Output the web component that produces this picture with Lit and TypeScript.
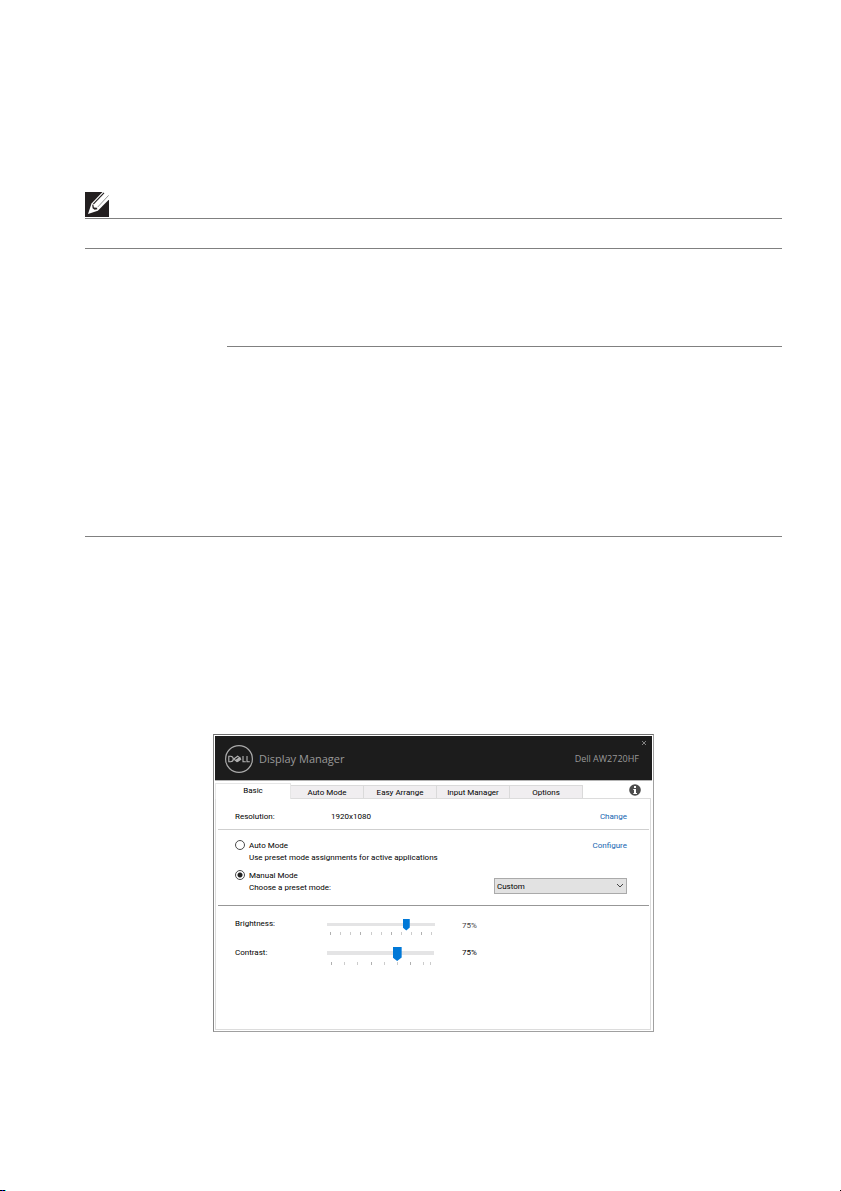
import { LitElement, html, css, svg } from "lit";
import { customElement, property, state } from "lit/decorators.js";

@customElement("level-slider")
class LevelSlider extends LitElement {
  @property() label = "";
  @property({ type: Number }) position = 50;
  @property() shown = "";
  @property({ type: Array }) ticks: number[] = [];
  @property({ type: Boolean, reflect: true }) large = false;

  static styles = css`
    :host { display: grid; grid-template-columns: 92px 108px 1fr; align-items: start; height: 29px; }
    label, output { line-height: 12px; }
    label { margin-top: 1px; }
    output { padding-left: 27px; margin-top: 3px; color: #444; }
    .scale { display: block; }
    input { appearance: none; display: block; width: 108px; height: 14px; margin: 0; background: none; }
    input::-webkit-slider-runnable-track { height: 3px; background: #e4e4e5; }
    input::-webkit-slider-thumb {
      appearance: none; width: 7px; height: 12px; margin-top: -4px;
      background: #0078d7; border: 0; border-radius: 0;
      clip-path: polygon(0 0, 100% 0, 100% 75%, 50% 100%, 0 75%);
    }
    svg { display: block; width: 108px; height: 4px; margin-top: 1px; }
    :host([large]) output { color: #000; margin-top: 1px; }
    :host([large]) input { width: 107px; }
    :host([large]) input::-webkit-slider-runnable-track { height: 4px; }
    :host([large]) input::-webkit-slider-thumb { width: 9px; height: 14px; }
    :host([large]) svg { margin-top: 2px; }
  `;

  render() {
    return html`
      <label for="level">${this.label}</label>
      <div class="scale">
        <input id="level" type="range" min="0" max="100" .value=${String(this.position)} />
        <svg viewBox="0 0 108 4" aria-hidden="true">
          ${this.ticks.map((x, i) => svg`<rect x=${x} y="0" width="1" height="3" fill=${i % 3 ? "#cccccc" : "#b0b0b0"} />`)}
        </svg>
      </div>
      <output for="level">${this.shown}</output>
    `;
  }
}

@customElement("display-manager")
class DisplayManager extends LitElement {
  @state() private mode = "manual";

  static styles = css`
    :host {
      display: flex; flex-direction: column; box-sizing: border-box; width: 100%; max-width: 441px; min-height: 298px;
      padding: 1px; border: 1px solid #a0a0a0; border-top-color: #707070; border-left-color: #868686;
      background: #fff; color: #000; font: 8px/12px Roboto, "Open Sans", sans-serif;
    }
    header { display: flex; height: 44px; background: #1c1c1c; color: #999; border-bottom: 1px solid #b4b4b4; }
    .logo { width: 30px; height: 30px; margin: 8px 0 0 9px; }
    h1 { flex: 1; margin: 14px 0 0 5px; font: 400 11px/18px "Open Sans", sans-serif; }
    .close { width: 10px; height: 10px; margin: 2px 3px 0 0; padding: 2px; border: 0; background: none; color: #8c8c8c; }
    .close svg, .info svg { display: block; width: 100%; height: 100%; }
    .right { display: flex; flex-direction: column; align-items: flex-end; }
    .device { margin: 4px 13px 0 0; font: 9px/14px "Open Sans", sans-serif; }
    nav { display: flex; align-items: flex-end; height: 18px; }
    .tab {
      flex: 0 0 73px; height: 14px; padding: 1px 0 0; font: inherit; color: #000; background: #f0eef0;
      border: 1px solid #dadada; border-left: 0; line-height: 12px;
    }
    .tab.active {
      position: relative; z-index: 1; flex-basis: 76px; height: 16px; padding-bottom: 2px;
      background: #fff; border-color: #e6e6e6; border-bottom: 0; border-left: 1px solid #e6e6e6;
    }
    .info { width: 12px; height: 12px; margin: 0 11px 3px auto; padding: 0; border: 0; background: none; }
    .panel { flex: 1; margin: -1px 1px 0 0; border: 1px solid #dcdcdc; padding: 0 1px 0 2px; }
    .row { display: flex; justify-content: space-between; padding: 0 22px 0 17px; }
    .resolution { height: 31px; padding-top: 12px; box-sizing: border-box; border-bottom: 1px solid #cfcfcf; }
    .resolution span:first-child { width: 96px; }
    .resolution a { margin-left: auto; }
    a { color: #1464b0; text-decoration: none; }
    .modes { height: 76px; box-sizing: border-box; padding-top: 10px; border-bottom: 1px solid #979797; }
    .option { display: grid; grid-template-columns: 14px 1fr; }
    .option input { appearance: none; width: 10px; height: 10px; margin: 0; border: 1px solid #4b4b4b; border-radius: 50%; background: #fff; }
    .option input:checked { background: radial-gradient(circle, #222 0 2px, #fff 3px); }
    .option p { grid-column: 2; margin: 0; }
    .manual { margin-top: 6px; }
    .select { position: relative; display: block; width: 133px; height: 16px; margin-top: 8px; }
    select { appearance: none; width: 100%; height: 16px; padding: 1px 2px 0; border: 1px solid #aaa; border-radius: 0; background: #e2e2e2; color: #000; font: inherit; }
    .select svg { position: absolute; right: 3px; top: 5px; width: 8px; height: 6px; pointer-events: none; }
    .levels { padding: 11px 0 0 17px; }
  `;

  private pick(mode: string) {
    this.mode = mode;
  }

  render() {
    return html`
      <header>
        <svg class="logo" viewBox="0 0 30 30" role="img" aria-label="Dell">
          <circle cx="15" cy="15" r="13.4" fill="none" stroke="#aaa" stroke-width="1.2" />
          <g fill="none" stroke="#b4b4b4" stroke-width="1.1">
            <path d="M4.8 12.2v5.6h1.7q2.8-.2 2.8-2.8t-2.8-2.8zM19 12v5.7h2.8M23 12v5.7h2.8" />
            <path d="M9.8 15l3.8-2.8 1.8 1.4-3.7 2.8zM12.8 16.7l3.9-2.9M13.2 17.9l3.9-2.9M9.8 15l3.4 2.9" />
          </g>
        </svg>
        <h1>Display Manager</h1>
        <div class="right">
          <button class="close" aria-label="Close"><svg viewBox="0 0 6 6"><path d="M1 1l4 4M5 1L1 5" stroke="currentColor" stroke-width=".9" /></svg></button>
          <span class="device">Dell AW2720HF</span>
        </div>
      </header>
      <nav>
        ${["Basic", "Auto Mode", "Easy Arrange", "Input Manager", "Options"].map(
          (name, i) => html`<button class="tab ${i === 0 ? "active" : ""}">${name}</button>`
        )}
        <button class="info" aria-label="Information">
          <svg viewBox="0 0 12 12"><circle cx="6" cy="6" r="5.8" fill="#4c4c4c" /><path d="M5 2h2v2H5zM4.3 5H7v4h1v1H4.3V9H5V6h-.7z" fill="#fff" /></svg>
        </button>
      </nav>
      <div class="panel">
        <div class="row resolution"><span>Resolution:</span><span>1920x1080</span><a href="#change">Change</a></div>
        <div class="modes">
          <div class="row">
            <div class="option">
              <input id="auto" type="radio" name="mode" .checked=${this.mode === "auto"} @change=${() => this.pick("auto")} />
              <label for="auto">Auto Mode</label>
              <p>Use preset mode assignments for active applications</p>
            </div>
            <a href="#configure">Configure</a>
          </div>
          <div class="row manual">
            <div class="option">
              <input id="manual" type="radio" name="mode" .checked=${this.mode === "manual"} @change=${() => this.pick("manual")} />
              <label for="manual">Manual Mode</label>
              <p><label for="preset">Choose a preset mode:</label></p>
            </div>
            <span class="select">
              <select id="preset"><option>Custom</option></select>
              <svg viewBox="0 0 8 6"><path d="M1 1l3 3 3-3" fill="none" stroke="#444" /></svg>
            </span>
          </div>
        </div>
        <div class="levels">
          <level-slider label="Brightness:" shown="75%" .position=${75} .ticks=${[3, 13, 23, 33, 44, 54, 64, 74, 84, 94, 104]}></level-slider>
          <level-slider large label="Contrast:" shown="75%" .position=${67} .ticks=${[4, 17, 30, 44, 57, 70, 83, 96, 103]}></level-slider>
        </div>
      </div>
    `;
  }
}

@customElement("app-root")
class AppRoot extends LitElement {
  static styles = css`
    :host { display: flex; flex-direction: column; min-height: 100vh; background: #fff; }
    main { padding: 192px 59px 0 85px; }
    .note { display: block; width: 24px; height: 25px; margin-bottom: 1px; }
    .sheet { border-top: 1px solid #808080; border-bottom: 1px solid #808080; }
    .heading { height: 29px; border-bottom: 1px solid #808080; }
    .body { display: grid; grid-template-columns: 142px 1fr; grid-template-rows: 98px 189px; }
    .upper { grid-column: 2; border-bottom: 1px solid #808080; }
    .figure { display: flex; justify-content: center; margin-top: 197px; }
    footer { display: flex; justify-content: space-between; height: 1px; margin-top: auto; }
    .start { width: 6px; background: linear-gradient(90deg, #000 0 2px, #00f 2px 3px, #000 3px 5px, #0ff 5px); }
    .end { width: 1px; background: #000; }
  `;

  render() {
    return html`
      <main>
        <svg class="note" viewBox="0 0 24 25" role="img" aria-label="Note">
          <path d="M0 0h24v25H0z" fill="#231f20" />
          <path d="M3 22L6.5 11.5 17.5 0H24v7.5L12.8 18.8z" fill="#fff" />
          <path d="M19 .8L8.3 12.2" fill="none" stroke="#231f20" stroke-width="1.1" />
          <path d="M23.6 3.4L12.6 15.2" fill="none" stroke="#777" stroke-width=".8" />
          <path d="M7.2 12.6l1.2.4.5 2.6 3 .2.5 1.4-2.8.5-2-1.4z" fill="#231f20" />
        </svg>
        <div class="sheet">
          <div class="heading"></div>
          <div class="body"><div class="upper"></div></div>
        </div>
        <div class="figure"><display-manager></display-manager></div>
      </main>
      <footer><span class="start"></span><span class="end"></span></footer>
    `;
  }
}
